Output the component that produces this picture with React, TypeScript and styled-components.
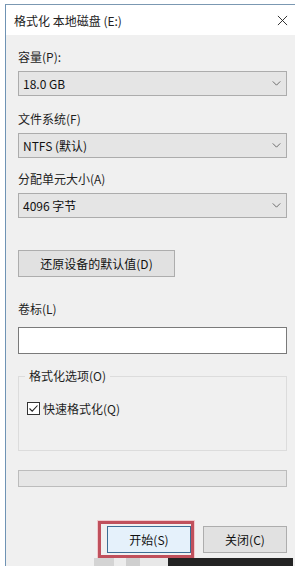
import styled, { createGlobalStyle } from 'styled-components';

const GlobalStyle = createGlobalStyle`
  html, body {
    margin: 0;
    padding: 0;
    background: #ffffff;
  }
  body {
    font-family: "Noto Sans CJK SC", "Noto Sans", sans-serif;
    font-size: 12px;
    color: #1a1a1a;
  }
`;

export default function App() {
  return (
    <>
      <GlobalStyle />
      <Page>
        <Window>
          <TitleBar>
            <Title>格式化 本地磁盘 (E:)</Title>
            <CloseIcon viewBox="0 0 12 12">
              <path d="M1 1 L11 11 M11 1 L1 11" stroke="#222" strokeWidth="1" fill="none" />
            </CloseIcon>
          </TitleBar>
          <Body>
            <Label $top={14}>容量(P):</Label>
            <Select value="18.0 GB" />
            <Label $top={15}>文件系统(F)</Label>
            <Select value="NTFS (默认)" />
            <Label $top={13}>分配单元大小(A)</Label>
            <Select value="4096 字节" />
            <RestoreButton>还原设备的默认值(D)</RestoreButton>
            <Label $top={24} $gap={10}>卷标(L)</Label>
            <TextInput />
            <GroupBox>
              <Legend>格式化选项(O)</Legend>
              <CheckRow>
                <CheckBox viewBox="0 0 13 13">
                  <rect x="0.5" y="0.5" width="12" height="12" fill="#fff" stroke="#333" />
                  <path d="M2.5 6.5 L5.2 9.2 L10.5 3.5" stroke="#222" strokeWidth="1.1" fill="none" />
                </CheckBox>
                <span>快速格式化(Q)</span>
              </CheckRow>
            </GroupBox>
            <Progress />
            <ButtonRow>
              <Highlight>
                <DialogButton $primary>开始(S)</DialogButton>
              </Highlight>
              <DialogButton>关闭(C)</DialogButton>
            </ButtonRow>
          </Body>
        </Window>
        <Taskbar>
          <TaskTile $c="#d4d4d4" $w={20} />
          <TaskTile $c="#ececec" $w={12} />
          <TaskTile $c="#cfcfcf" $w={14} />
          <TaskTile $c="#e8e8e8" $w={28} />
          <TaskTile $c="#232323" $w={125} />
        </Taskbar>
      </Page>
    </>
  );
}

function Select({ value }: { value: string }) {
  return (
    <SelectBox>
      <span>{value}</span>
      <Chevron viewBox="0 0 10 6">
        <path d="M0.5 0.5 L5 5 L9.5 0.5" stroke="#555" strokeWidth="1" fill="none" />
      </Chevron>
    </SelectBox>
  );
}

const Page = styled.div`
  position: relative;
  width: 302px;
  height: 566px;
  overflow: hidden;
  padding: 4px 0 0 5px;
  box-sizing: border-box;
`;

const Window = styled.div`
  width: 289px;
  height: 562px;
  border-left: 1px solid #6f93b4;
  border-top: 1px solid #7b98b2;
  display: flex;
  flex-direction: column;
`;

const TitleBar = styled.div`
  height: 30px;
  background: #ffffff;
  display: flex;
  align-items: center;
  justify-content: space-between;
  padding: 0 7px 0 8px;
`;

const Title = styled.div`
  font-size: 12px;
  color: #222;
  line-height: 16px;
  margin-top: 1px;
`;

const CloseIcon = styled.svg`
  width: 11px;
  height: 11px;
`;

const Body = styled.div`
  flex: 1;
  background: #f0f0f0;
  display: flex;
  flex-direction: column;
  padding: 0 8px 0 12px;
`;

const Label = styled.div<{ $top: number; $gap?: number }>`
  margin-top: ${p => p.$top}px;
  margin-bottom: ${p => p.$gap ?? 6}px;
  height: 16px;
  line-height: 16px;
  font-size: 12px;
  color: #1e1e1e;
`;

const SelectBox = styled.div`
  height: 25px;
  box-sizing: border-box;
  background: #e5e5e5;
  border: 1px solid #acacac;
  display: flex;
  align-items: center;
  justify-content: space-between;
  padding: 0 4px 0 4px;
  font-size: 12px;
  color: #111;
`;

const Chevron = styled.svg`
  width: 9px;
  height: 5px;
  margin-right: 1px;
`;

const RestoreButton = styled.div`
  margin-top: 32px;
  width: 157px;
  height: 27px;
  box-sizing: border-box;
  background: #e1e1e1;
  border: 1px solid #adadad;
  display: flex;
  align-items: center;
  justify-content: center;
  font-size: 12px;
  color: #111;
`;

const TextInput = styled.div`
  height: 27px;
  box-sizing: border-box;
  background: #ffffff;
  border: 1px solid #7a7a7a;
`;

const GroupBox = styled.div`
  margin-top: 22px;
  height: 75px;
  box-sizing: border-box;
  border: 1px solid #dcdcdc;
  position: relative;
  padding: 16px 0 0 8px;
`;

const Legend = styled.div`
  position: absolute;
  top: -9px;
  left: 6px;
  padding: 0 4px;
  background: #f0f0f0;
  font-size: 12px;
  line-height: 16px;
  color: #1e1e1e;
`;

const CheckRow = styled.div`
  display: flex;
  align-items: center;
  gap: 3px;
  font-size: 12px;
  color: #1e1e1e;
  margin-top: 7px;
`;

const CheckBox = styled.svg`
  width: 13px;
  height: 13px;
`;

const Progress = styled.div`
  margin-top: 19px;
  height: 17px;
  box-sizing: border-box;
  background: #e6e6e6;
  border: 1px solid #bcbcbc;
`;

const ButtonRow = styled.div`
  margin-top: 34px;
  display: flex;
  justify-content: flex-end;
  align-items: center;
  gap: 9px;
`;

const Highlight = styled.div`
  border: 3px solid #c0505c;
  box-shadow: 0 0 0 1px #f1c9cd;
  padding: 2px 0 2px 6px;
`;

const DialogButton = styled.div<{ $primary?: boolean }>`
  width: 84px;
  height: 27px;
  box-sizing: border-box;
  background: ${p => (p.$primary ? '#e5f1fb' : '#e1e1e1')};
  border: 1px solid ${p => (p.$primary ? '#3c6d94' : '#adadad')};
  display: flex;
  align-items: center;
  justify-content: center;
  font-size: 12px;
  color: #111;
`;

const Taskbar = styled.div`
  position: absolute;
  left: 94px;
  bottom: 0;
  height: 8px;
  display: flex;
`;

const TaskTile = styled.div<{ $c: string; $w: number }>`
  width: ${p => p.$w}px;
  background: ${p => p.$c};
`;
